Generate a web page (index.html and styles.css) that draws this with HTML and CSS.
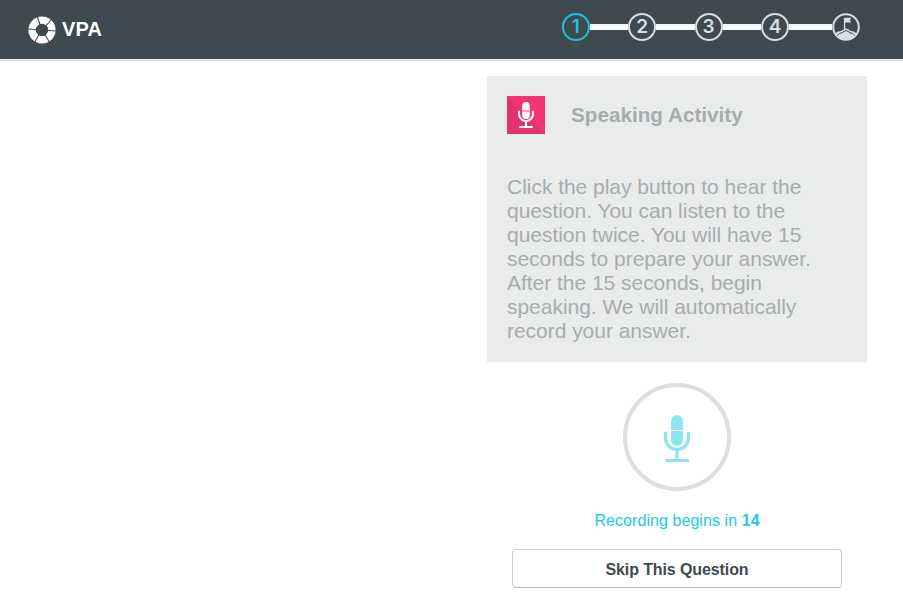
FILE: index.html
```html
<!DOCTYPE html>
<html lang="en">
<head>
<meta charset="utf-8">
<title>VPA Speaking Activity</title>
<link rel="stylesheet" href="styles.css">
</head>
<body>
<header class="topbar">
  <div class="brand">
    <svg class="brand-logo" viewBox="0 0 28 28" width="28" height="28" aria-hidden="true">
      <circle class="logo-ring" cx="14" cy="14" r="9.9" />
      <g class="logo-gaps">
        <path d="M14 14 L9 0" /><path d="M14 14 L24 3" /><path d="M14 14 L28 15" /><path d="M14 14 L22 27" /><path d="M14 14 L6 27" /><path d="M14 14 L0 13" />
      </g>
    </svg>
    <span class="brand-name">VPA</span>
  </div>
  <ol class="steps">
    <li class="step step-active">1</li>
    <li class="link"></li>
    <li class="step">2</li>
    <li class="link"></li>
    <li class="step">3</li>
    <li class="link"></li>
    <li class="step">4</li>
    <li class="link link-last"></li>
    <li class="step step-goal">
      <svg viewBox="0 0 28 28" width="28" height="28" aria-hidden="true">
        <circle class="goal-ring" cx="14" cy="14" r="12.8" />
        <path class="goal-hill" d="M3 21 C5 18.5 7.5 17.5 9.5 18 C11 16.5 13 15.5 14 15.5 C15.5 15.5 17 16.5 18.5 18 C20.5 17.5 23 18.5 25 21 C23 25 19 27 14 27 C9 27 5 25 3 21 Z" />
        <path class="goal-snow" d="M5.5 22.5 C7 20.5 8.5 19.8 10 20 C11 18.6 12.8 17.8 14 17.8 C15.4 17.8 17 18.6 18 20 C19.5 19.8 21 20.5 22.5 22.5" />
        <path class="goal-pole" d="M12.6 16 V5" />
        <path class="goal-flag" d="M12.6 4.8 H19.4 L17.8 7.2 L19.4 9.6 H12.6 Z" />
      </svg>
    </li>
  </ol>
</header>
<main class="page">
  <section class="activity">
    <div class="card">
      <div class="card-head">
        <span class="badge">
          <svg viewBox="0 0 38 38" width="38" height="38" aria-hidden="true">
            <path class="badge-shade" d="M0 0 L38 38 H0 Z" />
            <rect class="mic-fill-white" x="15.2" y="6" width="7.6" height="17" rx="3.8" />
            <path class="mic-gap-white" d="M15.2 15 H22.8" />
            <path class="mic-stroke-white" d="M12 15.5 V18 A7 7 0 0 0 26 18 V15.5 M19 25 V31 M13 31 H25" />
          </svg>
        </span>
        <h1 class="card-title">Speaking Activity</h1>
      </div>
      <p class="card-text">Click the play button to hear the question. You can listen to the question twice. You will have 15 seconds to prepare your answer. After the 15 seconds, begin speaking. We will automatically record your answer.</p>
    </div>
    <div class="recorder">
      <svg viewBox="0 0 28 50" width="28" height="50" aria-hidden="true">
        <rect class="mic-fill" x="8" y="3" width="12" height="31" rx="6" />
        <path class="mic-gap" d="M8 18.5 H20" />
        <path class="mic-stroke" d="M2.5 21 V26 A11.5 11.5 0 0 0 25.5 26 V21 M14 38 V48 M3.5 48.5 H24.5" />
      </svg>
    </div>
    <p class="countdown">Recording begins in <strong>14</strong></p>
    <button class="skip" type="button">Skip This Question</button>
  </section>
</main>
</body>
</html>
```
FILE: styles.css
```css
* { box-sizing: border-box; }
html, body { margin: 0; padding: 0; }
body {
  background: #fff;
  font-family: "Liberation Sans", Arial, sans-serif;
  height: 616px;
  overflow: hidden;
}
.topbar {
  height: 61px;
  background: #3f4a50;
  border-bottom: 2px solid #dbe8ee;
  display: flex;
  align-items: center;
  justify-content: space-between;
  padding: 0 43px 0 28px;
}
.brand { display: flex; align-items: center; gap: 6px; }
.logo-ring { fill: none; stroke: #fff; stroke-width: 7.4; }
.logo-gaps path { stroke: #3f4a50; stroke-width: 1.1; fill: none; }
.brand-name { color: #fff; font-size: 20px; font-weight: 700; letter-spacing: 0.1px; }
.steps { list-style: none; margin: 0 0 6px; padding: 0; display: flex; align-items: center; }
.step {
  width: 28px;
  height: 28px;
  border-radius: 50%;
  border: 2px solid #d3e0e6;
  color: #d3e0e6;
  display: flex;
  align-items: center;
  justify-content: center;
  font-family: "Inter", "Liberation Sans", sans-serif;
  font-size: 19px;
  font-weight: 600;
  background: #3f4a50;
}
.step-active { border-color: #1cc4d8; color: #1cc4d8; }
.step-goal { border: 0; background: none; }
.link { width: 38.4px; height: 6px; background: #f4fbff; }
.link-last { width: 43px; }
.goal-ring { fill: #3f4a50; stroke: #d3e0e6; stroke-width: 2; }
.goal-hill { fill: #d3e0e6; }
.goal-snow { fill: none; stroke: #3f4a50; stroke-width: 1; }
.goal-pole { stroke: #d3e0e6; stroke-width: 1.4; fill: none; }
.goal-flag { fill: #d3e0e6; }
.page { display: flex; justify-content: flex-end; padding: 15px 36px 0 0; }
.activity { width: 380px; display: flex; flex-direction: column; align-items: center; }
.card { width: 100%; height: 286px; background: #eaecec; padding: 20px 20px 0; }
.card-head { display: flex; align-items: center; gap: 26px; height: 38px; }
.badge { width: 38px; height: 38px; background: #f4356f; display: block; flex: none; }
.badge svg { display: block; }
.badge-shade { fill: #e1336c; }
.mic-fill-white { fill: #fff; }
.mic-gap-white { stroke: #f4356f; stroke-width: 1; }
.mic-stroke-white { fill: none; stroke: #fff; stroke-width: 2; stroke-linecap: round; }
.card-title { margin: 0; font-size: 20.7px; font-weight: 700; color: #a7abae; }
.card-text { margin: 41px 0 0; font-size: 21px; line-height: 24px; color: #a7abae; letter-spacing: -0.03px; }
.recorder {
  width: 108px;
  height: 108px;
  margin-top: 21px;
  border: 4px solid #dedede;
  border-radius: 50%;
  display: flex;
  align-items: center;
  justify-content: center;
}
.recorder svg { display: block; }
.mic-fill { fill: #8fe5ef; }
.mic-gap { stroke: #fff; stroke-width: 1; }
.mic-stroke { fill: none; stroke: #8fe5ef; stroke-width: 3.2; stroke-linecap: round; }
.countdown { margin: 21px 0 0; font-size: 16px; line-height: 17px; letter-spacing: 0.07px; color: #20cbe0; }
.countdown strong { font-weight: 700; }
.skip {
  width: 330px;
  height: 39px;
  margin-top: 20px;
  padding: 2px 0 0;
  background: #fff;
  border: 1px solid #cfcfcf;
  border-bottom-color: #b4b6b7;
  border-radius: 4px;
  color: #3f4a50;
  font-family: inherit;
  font-size: 16px;
  font-weight: 700;
  letter-spacing: -0.1px;
}
```
